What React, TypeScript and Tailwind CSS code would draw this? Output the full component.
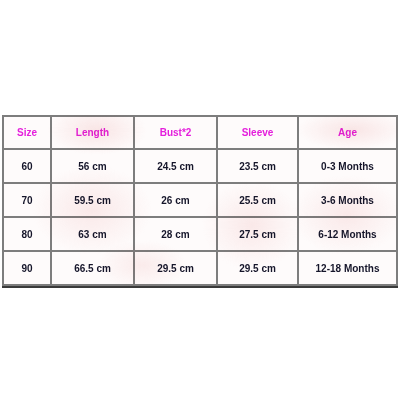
import React from "react";

const headers = ["Size", "Length", "Bust*2", "Sleeve", "Age"];
const rows = [
  ["60", "56 cm", "24.5 cm", "23.5 cm", "0-3 Months"],
  ["70", "59.5 cm", "26 cm", "25.5 cm", "3-6 Months"],
  ["80", "63 cm", "28 cm", "27.5 cm", "6-12 Months"],
  ["90", "66.5 cm", "29.5 cm", "29.5 cm", "12-18 Months"],
];

export default function App() {
  return (
    <div
      className="w-[400px] h-[400px] bg-white flex flex-col pt-[115px] pl-[2px]"
      style={{ fontFamily: '"Liberation Sans", Arial, sans-serif' }}
    >
      <div className="relative w-[396px]">
        <div className="grid grid-cols-[46px_81px_81px_79px_97px] grid-rows-[31px_32px_32px_32px_32px] gap-[2px] bg-[#7d7d7d] p-[2px] border-b-2 border-b-[#3a3a3a]">
          {headers.map((h) => (
            <div
              key={h}
              className="bg-[#fefbfb] flex items-center justify-center text-[10px] font-bold text-[#e41fdc]"
            >
              {h}
            </div>
          ))}
          {rows.map((r, i) =>
            r.map((c, j) => (
              <div
                key={i + "-" + j}
                className="bg-[#fefbfb] flex items-center justify-center text-[10px] font-bold text-[#15152a]"
              >
                {c}
              </div>
            ))
          )}
        </div>
        <div className="pointer-events-none absolute inset-0 mix-blend-multiply opacity-60 bg-[radial-gradient(ellipse_50px_25px_at_95px_15px,#f6dada_0%,transparent_100%),radial-gradient(ellipse_55px_20px_at_350px_15px,#f6dada_0%,transparent_100%),radial-gradient(ellipse_60px_45px_at_90px_95px,#f8e0e0_0%,transparent_100%),radial-gradient(ellipse_50px_45px_at_250px_110px,#f8e0e0_0%,transparent_100%),radial-gradient(ellipse_55px_40px_at_345px_100px,#f8e0e0_0%,transparent_100%),radial-gradient(ellipse_45px_25px_at_140px_150px,#f9e4e4_0%,transparent_100%)]" />
      </div>
    </div>
  );
}
